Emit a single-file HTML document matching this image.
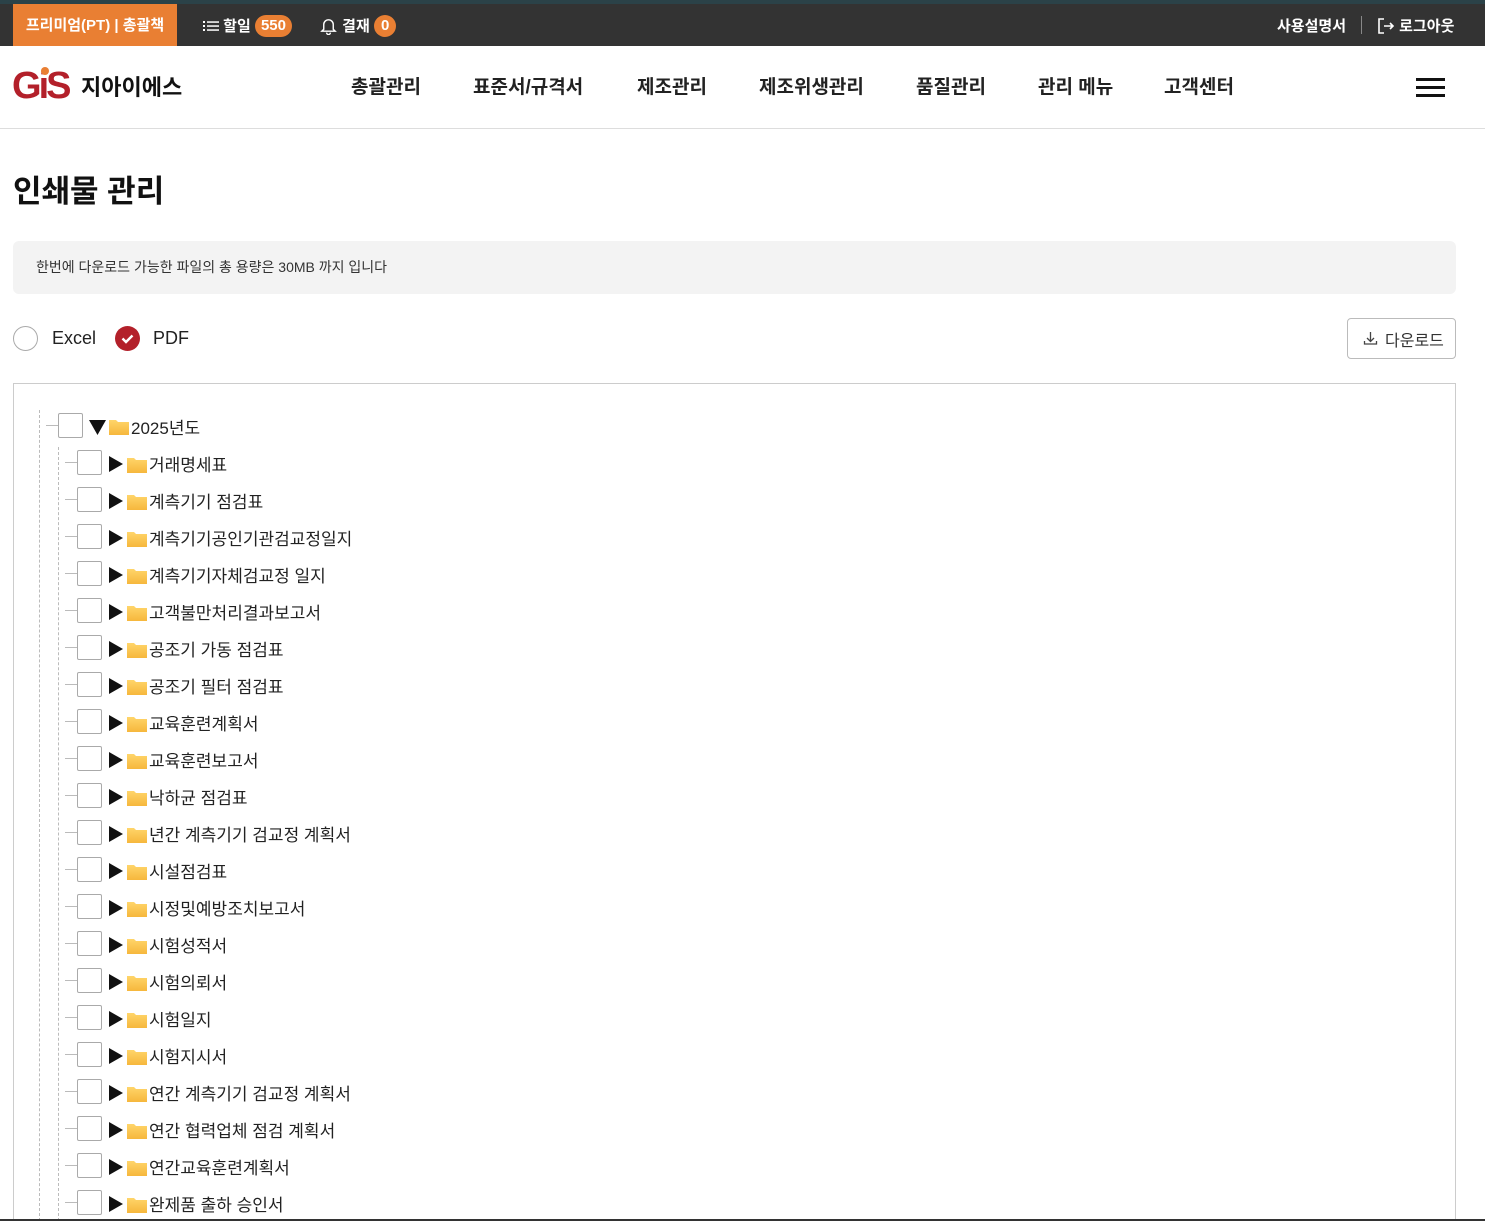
<!DOCTYPE html>
<html><head><meta charset="utf-8">
<style>
*{margin:0;padding:0;box-sizing:border-box}
html{width:1485px;height:1221px;overflow:hidden}
body{width:1485px;height:1221px;overflow:hidden;background:#fff;font-family:"Liberation Sans","Noto Sans CJK KR",sans-serif;color:#222;position:relative}
.abs{position:absolute}
.topline{left:0;top:0;width:1485px;height:4px;background:#2b4248}
.top{left:0;top:4px;width:1485px;height:42px;background:#333}
.tab{left:13px;top:6px;width:164px;height:40px;background:#e97f33;color:#fff;font-weight:bold;font-size:15px;line-height:40px;text-align:center}
.tw{color:#fff;font-weight:bold;font-size:15px;line-height:42px;top:6px}
.badge{display:inline-block;background:#e97f33;color:#fff;border-radius:12px;height:22px;line-height:22px;padding:0 6px;font-size:15px;vertical-align:middle;margin-top:-3px}
.nav{top:72px;font-size:19px;font-weight:bold;color:#222}
.hr{left:0;top:128px;width:1485px;height:1px;background:#ddd}
.cb{width:25px;height:25px;border:1px solid #aaa;border-radius:2px;background:#fff}
.lbl{font-size:17px;color:#222}
.hl{height:1px;background:#bbb;width:12px}
</style></head><body>
<div class="abs topline"></div>
<div class="abs top"></div>
<div class="abs" style="left:13px;top:4px;width:164px;height:42px;background:#e97f33"></div>
<div class="abs tab">프리미엄(PT) | 총괄책</div>
<div class="abs tw" style="left:203px">
<svg width="16" height="12" style="vertical-align:middle;margin-top:-3px" viewBox="0 0 16 12"><g fill="#fff"><rect x="0" y="1" width="2" height="2"/><rect x="0" y="5" width="2" height="2"/><rect x="0" y="9" width="2" height="2"/><rect x="4" y="1.3" width="12" height="1.5"/><rect x="4" y="5.3" width="12" height="1.5"/><rect x="4" y="9.3" width="12" height="1.5"/></g></svg> 할일 <span class="badge">550</span></div>
<div class="abs tw" style="left:319px">
<svg width="19" height="19" style="vertical-align:middle;margin-top:-3px" viewBox="0 0 20 20" fill="none" stroke="#fff" stroke-width="1.5"><path d="M5 14V9a5 5 0 0 1 10 0v5l2 2H3z"/><path d="M8 17.5a2 2 0 0 0 4 0"/></svg> 결재 <span class="badge" style="padding:0 7px">0</span></div>
<div class="abs tw" style="left:1277px">사용설명서</div>
<div class="abs" style="left:1361px;top:16px;width:1px;height:18px;background:#888"></div>
<div class="abs tw" style="left:1377px">
<svg width="18" height="18" style="vertical-align:middle;margin-top:-3px" viewBox="0 0 18 18" fill="none" stroke="#fff" stroke-width="1.6"><path d="M7 2H2v14h5"/><path d="M7 9h9M13 6l3 3-3 3"/></svg> 로그아웃</div>

<div class="abs" style="left:12px;top:66px;font-size:38px;font-weight:900;color:#b3202a;letter-spacing:-3px;line-height:40px;font-family:'Liberation Sans',sans-serif">G<span style="position:relative">i<span style="position:absolute;left:2px;top:2px;width:8px;height:8px;border-radius:50%;background:#e97f33"></span></span>S</div>
<div class="abs" style="left:81px;top:70px;font-size:22px;font-weight:bold;color:#111">지아이에스</div>

<div class="abs nav" style="left:351px">총괄관리</div>
<div class="abs nav" style="left:473px">표준서/규격서</div>
<div class="abs nav" style="left:637px">제조관리</div>
<div class="abs nav" style="left:759px">제조위생관리</div>
<div class="abs nav" style="left:916px">품질관리</div>
<div class="abs nav" style="left:1038px">관리 메뉴</div>
<div class="abs nav" style="left:1164px">고객센터</div>
<div class="abs" style="left:1416px;top:78px;width:29px;height:3px;background:#111"></div>
<div class="abs" style="left:1416px;top:86px;width:29px;height:3px;background:#111"></div>
<div class="abs" style="left:1416px;top:94px;width:29px;height:3px;background:#111"></div>
<div class="abs hr"></div>

<div class="abs" style="left:13px;top:166px;font-size:31px;font-weight:bold;color:#111">인쇄물 관리</div>
<div class="abs" style="left:13px;top:241px;width:1443px;height:53px;background:#f3f3f3;border-radius:6px"></div>
<div class="abs" style="left:36px;top:257px;font-size:14px;color:#333">한번에 다운로드 가능한 파일의 총 용량은 30MB 까지 입니다</div>

<div class="abs" style="left:13px;top:326px;width:25px;height:25px;border:1px solid #aaa;border-radius:50%"></div>
<div class="abs" style="left:52px;top:328px;font-size:18px;color:#222">Excel</div>
<div class="abs" style="left:115px;top:326px;width:25px;height:25px;border-radius:50%;background:#b3202a"></div>
<svg class="abs" style="left:115px;top:326px" width="25" height="25" viewBox="0 0 25 25"><path d="M7.5 12.5l3.5 3.5 6.5-6.5" fill="none" stroke="#fff" stroke-width="2.4"/></svg>
<div class="abs" style="left:153px;top:328px;font-size:18px;color:#222">PDF</div>

<div class="abs" style="left:1347px;top:318px;width:109px;height:41px;border:1px solid #bbb;border-radius:4px;background:#fff"></div>
<svg class="abs" style="left:1363px;top:331px" width="15" height="15" viewBox="0 0 15 15" fill="none" stroke="#444" stroke-width="1.3"><path d="M7.5 1v9M4 7l3.5 3.5L11 7M1.5 10v3h12v-3"/></svg>
<div class="abs" style="left:1385px;top:327px;font-size:16px;color:#333">다운로드</div>

<div class="abs" style="left:13px;top:383px;width:1443px;height:838px;border:1px solid #ccc;border-bottom:none"></div>
<div class="abs" style="left:39px;top:410px;width:0;height:811px;border-left:1px dashed #bbb"></div>
<div class="abs" style="left:58px;top:447px;width:0;height:774px;border-left:1px dashed #bbb"></div>

<svg width="0" height="0" style="position:absolute"><defs><linearGradient id="fg" x1="0" y1="0" x2="0" y2="1"><stop offset="0" stop-color="#ffd56a"/><stop offset="1" stop-color="#f6b73c"/></linearGradient></defs></svg>

<div class="abs hl" style="left:46px;top:425px"></div>
<div class="abs cb" style="left:58px;top:413px"></div>
<svg class="abs" style="left:89px;top:420px" width="17" height="15" viewBox="0 0 17 15"><path d="M0 0h17L8.5 15z" fill="#111"/></svg>
<svg class="abs" style="left:109px;top:419px" width="20" height="16" viewBox="0 0 20 16"><path d="M0 1h7l2 2h11v13H0z" fill="url(#fg)"/></svg>
<div class="abs lbl" style="left:131px;top:414px">2025년도</div>

<div id="kids"></div>
<script>
var n=["거래명세표","계측기기 점검표","계측기기공인기관검교정일지","계측기기자체검교정 일지","고객불만처리결과보고서","공조기 가동 점검표","공조기 필터 점검표","교육훈련계획서","교육훈련보고서","낙하균 점검표","년간 계측기기 검교정 계획서","시설점검표","시정및예방조치보고서","시험성적서","시험의뢰서","시험일지","시험지시서","연간 계측기기 검교정 계획서","연간 협력업체 점검 계획서","연간교육훈련계획서","완제품 출하 승인서"];
var h="";
for(var i=0;i<n.length;i++){var c=464+37*i;
h+='<div class="abs hl" style="left:65px;top:'+(c-2)+'px"></div>'+
'<div class="abs cb" style="left:77px;top:'+(c-14)+'px"></div>'+
'<svg class="abs" style="left:109px;top:'+(c-8)+'px" width="14" height="16" viewBox="0 0 14 16"><path d="M0 0l14 8-14 8z" fill="#111"/></svg>'+
'<svg class="abs" style="left:127px;top:'+(c-7)+'px" width="20" height="16" viewBox="0 0 20 16"><path d="M0 1h7l2 2h11v13H0z" fill="url(#fg)"/></svg>'+
'<div class="abs lbl" style="left:149px;top:'+(c-13)+'px">'+n[i]+'</div>';}
document.getElementById("kids").innerHTML=h;
</script>
<div class="abs" style="left:0;top:1219px;width:1485px;height:2px;background:#333"></div>
</body></html>
